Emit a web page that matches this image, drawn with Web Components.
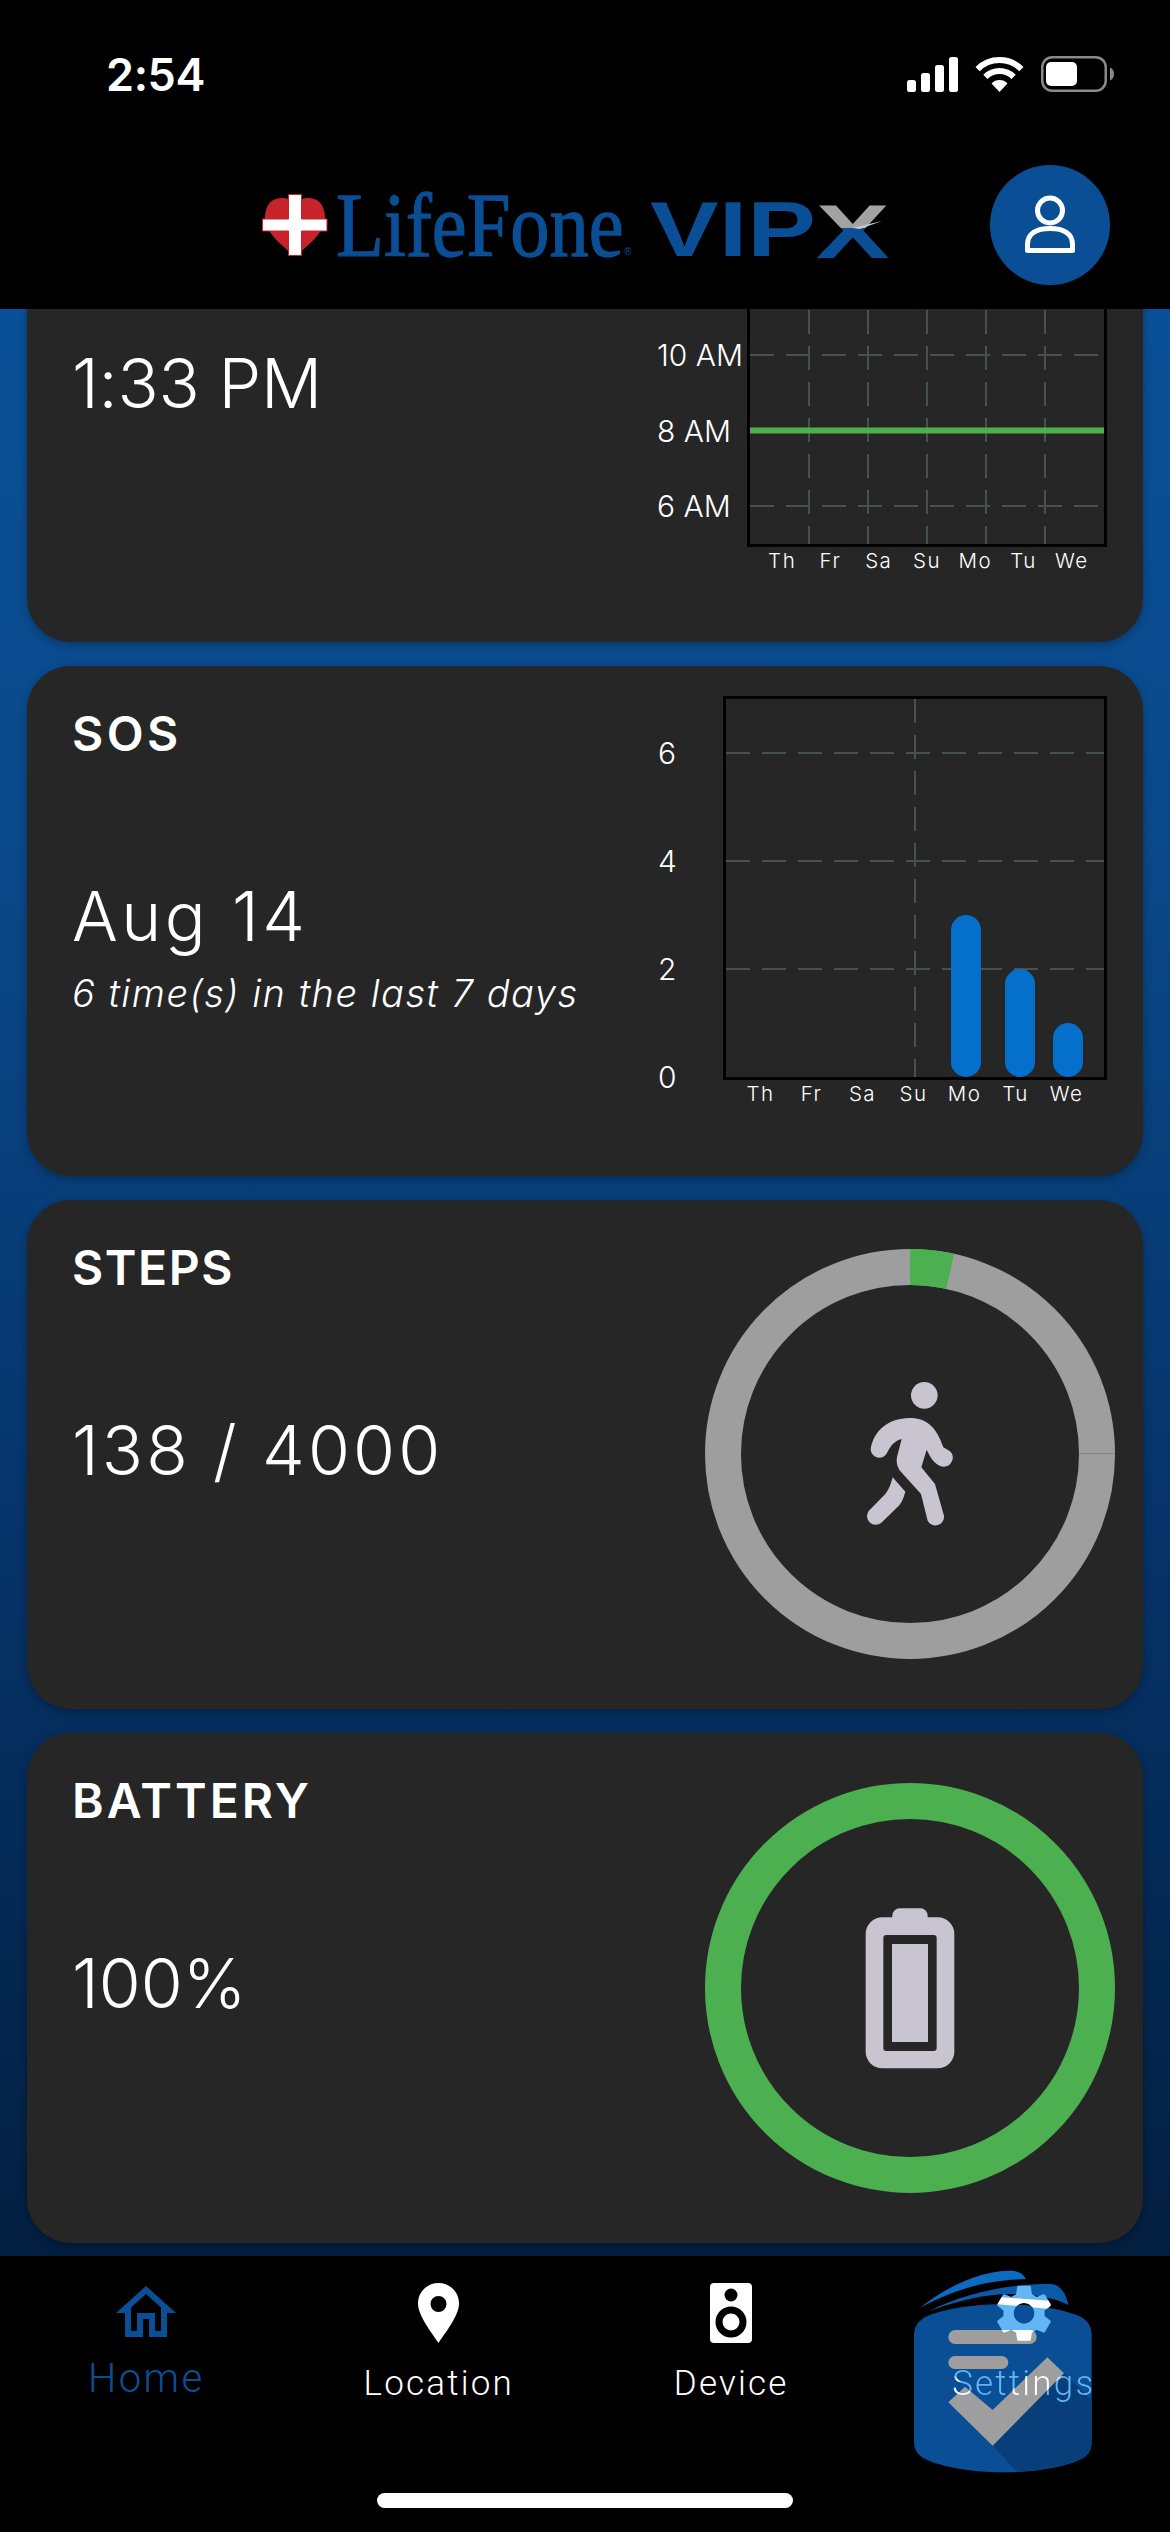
<!DOCTYPE html>
<html lang="en">
<head>
<meta charset="utf-8">
<title>LifeFone VIPx</title>
<style>
html,body{margin:0;padding:0;background:#000;width:1170px;height:2532px;overflow:hidden}
body{font-family:"Inter","Liberation Sans",sans-serif;color:#fff}
</style>
</head>
<body>
<app-shell>
  <status-bar slot="status"></status-bar>
  <app-header slot="header"></app-header>

  <metric-card title-text="" style="--vls:-.2px">
    <span slot="value">1:33 PM</span>
    <week-chart slot="aside" axis-width="90" axis-top="4.5" plot-width="354" rows=",,10 AM,8 AM,6 AM" row-height="75.6"
      vlines="59,118,177,236,295" hlines="38,113,189,265,340" line="264.5" label-pad="11,11" label-width="48.3"></week-chart>
  </metric-card>

  <metric-card title-text="SOS" style="--tls:3.5px;--vls:3.5px">
    <span slot="value">Aug 14</span>
    <span slot="note">6 time(s) in the last 7 days</span>
    <week-chart slot="aside" axis-width="65" axis-top="3" plot-width="378" rows="6,4,2,0" row-height="108"
      vlines="189" hlines="54,162,270" bars="225,279,327" bar-heights="162,108,54" label-pad="12,15" label-width="51"></week-chart>
  </metric-card>

  <metric-card title-text="STEPS" style="--tls:1.6px;--vls:3.1px">
    <span slot="value">138 / 4000</span>
    <ring-gauge slot="aside" kind="steps"></ring-gauge>
  </metric-card>

  <metric-card title-text="BATTERY" style="--tls:3px;--vls:0">
    <span slot="value">100%</span>
    <ring-gauge slot="aside" kind="battery"></ring-gauge>
  </metric-card>

  <tab-bar slot="tabs"></tab-bar>
</app-shell>

<script>
const BLUE = '#0a4f95';

class AppShell extends HTMLElement {
  constructor(){
    super();
    this.attachShadow({mode:'open'}).innerHTML = `
    <style>
      :host{display:flex;flex-direction:column;width:1170px;height:2532px;background:#000}
      .top{flex:none;background:#000;position:relative;z-index:2}
      .scroll{flex:1;min-height:0;overflow:hidden;background:linear-gradient(180deg,#0a5096 0%,#0a4a8c 25%,#06356c 60%,#031f40 100%)}
      .inner{display:flex;flex-direction:column;gap:24px;padding:0 27px;margin-top:-176.5px}
      .bottom{flex:none;position:relative;z-index:2}
    </style>
    <div class="top"><slot name="status"></slot><slot name="header"></slot></div>
    <div class="scroll"><div class="inner"><slot></slot></div></div>
    <div class="bottom"><slot name="tabs"></slot></div>`;
  }
}

class StatusBar extends HTMLElement {
  constructor(){
    super();
    this.attachShadow({mode:'open'}).innerHTML = `
    <style>
      :host{display:flex;align-items:center;justify-content:space-between;height:148px;padding:0 56px 0 106px;box-sizing:border-box;background:#000}
      .time{font:600 45px/1 "Inter","Liberation Sans",sans-serif;color:#fff;letter-spacing:-.4px}
      .icons{display:flex;align-items:center;gap:17px}
      svg{display:block}
    </style>
    <span class="time">2:54</span>
    <div class="icons">
      <svg width="51" height="36" viewBox="0 0 51 36"><g fill="#fff">
        <rect x="0" y="24" width="9" height="12" rx="2.5"/><rect x="14" y="17" width="9" height="19" rx="2.5"/>
        <rect x="28" y="9" width="9" height="27" rx="2.5"/><rect x="42" y="1" width="9" height="35" rx="2.5"/></g></svg>
      <svg width="49" height="36" viewBox="0 0 49 36"><g fill="none" stroke="#fff" stroke-width="6">
        <path d="M2.6 13.1A31 31 0 0 1 46.4 13.1"/><path d="M10.4 20.9A20 20 0 0 1 38.6 20.9"/></g>
        <path d="M24.5 36L16.5 27.5A11 11 0 0 1 32.5 27.5Z" fill="#fff"/></svg>
      <svg width="73" height="36" viewBox="0 0 73 36">
        <rect x="1.25" y="1.25" width="63.5" height="33.5" rx="10" fill="none" stroke="#8a8a8a" stroke-width="2.5"/>
        <rect x="5" y="6" width="31" height="24" rx="5" fill="#fff"/>
        <path d="M69 11.5c2.5.8 4 3.4 4 6.5s-1.500 5.700-4 6.500z" fill="#8a8a8a"/></svg>
    </div>`;
  }
}

class LifeLogo extends HTMLElement {
  constructor(){
    super();
    this.attachShadow({mode:'open'}).innerHTML = `
    <style>:host{display:block;width:626px;height:80px}svg{display:block;overflow:visible}</style>
    <svg width="626" height="80" viewBox="0 0 626 80" role="img" aria-label="LifeFone VIPx">
      <defs><linearGradient id="xg" x1="0" y1="0" x2="0" y2="1">
        <stop offset=".46" stop-color="#a2a2a2"/><stop offset=".46" stop-color="${BLUE}"/></linearGradient></defs>
      <path d="M33 14C28 8 20 7 14 9 6 11 3 20 3 28 3 42 20 56 33 66 46 56 63 42 63 28 63 20 60 11 52 9 46 7 38 8 33 14Z" fill="#c8232c"/>
      <path d="M26.500 4.500h13v24.500h25.500v12h-25.500v24.500h-13v-24.500h-26v-12h26z" fill="#fff" stroke="#c8232c" stroke-width="1"/>
      <g fill="${BLUE}">
        <text transform="translate(74 66) scale(.872 1)" font-family="Liberation Serif" font-size="90" stroke="${BLUE}" stroke-width="1.300">LifeFone</text>
        <text x="362" y="65" font-family="Liberation Sans" font-size="10">®</text>
        <text transform="translate(388 66) scale(1.32 1)" font-family="Liberation Sans" font-weight="700" font-size="78">VIP</text>
      </g>
      <text transform="translate(554 68) scale(1.45 1)" font-family="Liberation Sans" font-weight="700" font-size="76" fill="url(#xg)">X</text>
      <path d="M552 76l10-16 8-2-14 12z" fill="${BLUE}"/>
      <path d="M590 38l30-7-22 8z" fill="#c9c9c9"/>
    </svg>`;
  }
}

class AppHeader extends HTMLElement {
  constructor(){
    super();
    this.attachShadow({mode:'open'}).innerHTML = `
    <style>
      :host{display:flex;align-items:flex-start;justify-content:space-between;height:161px;box-sizing:border-box;padding:17px 60px 0 262px;background:#000}
      .logo{margin-top:25px}
      .btn{width:120px;height:120px;border-radius:50%;background:${BLUE};display:flex;align-items:center;justify-content:center}
      svg{display:block}
    </style>
    <life-logo class="logo"></life-logo>
    <div class="btn"><svg width="52" height="60" viewBox="0 0 52 60" fill="none" stroke="#fff" stroke-width="5">
      <circle cx="26" cy="15.500" r="12.500"/>
      <path d="M3.500 55.500v-6c0-11 9-16 22.500-16s22.500 5 22.500 16v6z" stroke-linejoin="round"/></svg></div>`;
  }
}

class MetricCard extends HTMLElement {
  constructor(){
    super();
    const t = this.getAttribute('title-text') || '';
    this.attachShadow({mode:'open'}).innerHTML = `
    <style>
      :host{display:flex;justify-content:space-between;height:509.5px;box-sizing:border-box;background:#262626;border-radius:44px;box-shadow:0 3px 8px rgba(0,0,0,.28);overflow:hidden;flex:none;color:#fff}
      .left{flex:1;min-width:0;padding:30px 0 0 45px;display:flex;flex-direction:column}
      .title{height:76px;line-height:76px;font-size:48px;font-weight:600;letter-spacing:var(--tls,1.8px);font-family:"Inter","Liberation Sans",sans-serif}
      .value{margin-top:104px;height:80px;line-height:80px;font-size:68px;font-weight:300;letter-spacing:var(--vls,.5px);white-space:nowrap}
      .note{margin-top:12px;height:50px;line-height:50px;font-size:38px;font-weight:300;font-style:italic;letter-spacing:1.5px;white-space:nowrap}
      .aside{flex:none;display:flex;align-items:center}
      ::slotted(week-chart){align-self:flex-start;margin:30px 36px 0 0}
      ::slotted(ring-gauge){margin-right:28px}
    </style>
    <div class="left">
      <div class="title">${t}</div>
      <div class="value"><slot name="value"></slot></div>
      <div class="note"><slot name="note"></slot></div>
    </div>
    <div class="aside"><slot name="aside"></slot></div>`;
  }
}

class WeekChart extends HTMLElement {
  constructor(){
    super();
    const a = n => this.getAttribute(n) || '';
    const nums = n => a(n) ? a(n).split(',').map(Number) : [];
    const W = +a('plot-width'), H = 378;
    const rowH = +a('row-height');
    const dash = 'stroke="#46524e" stroke-width="2" stroke-dasharray="24 12"';
    const v = nums('vlines').map(x => `<line x1="${x}" x2="${x}" y1="0" y2="${H}" ${dash}/>`).join('');
    const h = nums('hlines').map(y => `<line x1="0" x2="${W}" y1="${y}" y2="${y}" ${dash}/>`).join('');
    const bh = nums('bar-heights');
    const bars = nums('bars').map((x,i) => `<rect x="${x}" y="${H-bh[i]}" width="30" height="${bh[i]}" rx="15" fill="#0570cc"/>`).join('');
    const green = a('line') ? `<rect x="0" y="${+a('line')-3}" width="${W}" height="6" fill="#4caf50"/>` : '';
    const rows = a('rows').split(',').map(t => `<div class="yl">${t}</div>`).join('');
    const [pl,pr] = nums('label-pad');
    const lw = +a('label-width');
    const days = ['Th','Fr','Sa','Su','Mo','Tu','We'].map(d => `<span style="width:${lw}px">${d}</span>`).join('');
    this.attachShadow({mode:'open'}).innerHTML = `
    <style>
      :host{display:grid;grid-template-columns:${a('axis-width')}px ${W+6}px;grid-template-rows:${H+6}px 28px;flex:none;color:#fff}
      .axis{grid-row:1/3;padding-top:${a('axis-top')}px;height:${H}px;font-size:30px;font-weight:300}
      .yl{height:${rowH}px;line-height:${rowH}px;white-space:nowrap}
      .plot{border:3px solid #000;width:${W}px;height:${H}px}
      svg{display:block}
      .days{grid-column:2;display:flex;box-sizing:border-box;padding:0 ${pr}px 0 ${pl}px;font-size:20.500px;font-weight:300;line-height:28px;letter-spacing:1.5px}
      .days span{display:block;text-align:center;flex:none}
    </style>
    <div class="axis">${rows}</div>
    <div class="plot"><svg width="${W}" height="${H}" viewBox="0 0 ${W} ${H}">${v}${h}${green}${bars}</svg></div>
    <div class="days">${days}</div>`;
  }
}

class RingGauge extends HTMLElement {
  constructor(){
    super();
    const steps = this.getAttribute('kind') === 'steps';
    const ring = steps
      ? `<circle cx="205" cy="205" r="187" fill="none" stroke="#9e9e9e" stroke-width="36"/>
         <circle cx="205" cy="205" r="187" fill="none" stroke="#4caf50" stroke-width="36" pathLength="360" stroke-dasharray="12.42 360" transform="rotate(-90 205 205)"/>
         <line x1="374" x2="410" y1="204.500" y2="204.500" stroke="#858585" stroke-width="1"/>`
      : `<circle cx="205" cy="205" r="187" fill="none" stroke="#4caf50" stroke-width="36"/>`;
    const icon = steps
      ? `<g transform="translate(-25,-30) scale(.33333)" fill="#c9c5d0">
           <circle cx="733" cy="529" r="40"/>
           <path d="M572 690C580 640 620 597 690 597 740 597 770 625 790 685L808 695A27 27 0 0 1 790 743C770 740 755 725 740 692L724 745 765 795 792 890A26 26 0 0 1 743 905L723 825 660 755C650 740 648 725 652 710L665 660C645 665 632 680 622 700A26 26 0 0 1 572 690Z"/>
           <path d="M638 775L676 818C670 840 665 850 655 862L604 911A26 26 0 0 1 566 876L616 825C628 810 632 795 638 775Z"/>
         </g>`
      : `<g transform="translate(-25,-34) scale(.33333)">
           <rect x="637" y="478" width="106" height="60" rx="22" fill="#c9c5d0"/>
           <rect x="557" y="505" width="266" height="453" rx="50" fill="#c9c5d0"/>
           <rect x="610" y="558" width="160" height="348" rx="9" fill="#262626"/>
           <rect x="636" y="585" width="108" height="294" fill="#c9c5d0"/>
         </g>`;
    this.attachShadow({mode:'open'}).innerHTML = `
    <style>:host{display:block;width:410px;height:410px;flex:none}svg{display:block}</style>
    <svg width="410" height="410" viewBox="0 0 410 410">${ring}${icon}</svg>`;
  }
}

class TabItem extends HTMLElement {
  constructor(){
    super();
    this.attachShadow({mode:'open'}).innerHTML = `
    <style>
      :host{display:flex;flex-direction:column;align-items:center;position:relative;padding-top:21px;color:#fff}
      .icon{height:72px;display:flex;align-items:center;justify-content:center;position:relative;z-index:1}
      .label{margin-top:12px;height:46px;font:300 35px/46px Roboto,"Liberation Sans",sans-serif;letter-spacing:2.2px;white-space:nowrap;position:relative;z-index:1}
      :host([active]) .label{margin-top:7px;font-size:40px;letter-spacing:2.4px;color:${BLUE}}
      :host([kind=settings]) .label{color:transparent;
        background-color:#64b5f6;
        background-image:linear-gradient(45deg,#fff 0 24px,transparent 24px),linear-gradient(135deg,transparent 63px,#fff 63px 88px,transparent 88px);
        -webkit-background-clip:text;background-clip:text}
      ::slotted(svg){display:block}
    </style>
    <div class="icon"><slot name="icon"></slot></div>
    <div class="label"><slot></slot></div>
    <slot name="overlay"></slot>`;
  }
}

class TabBar extends HTMLElement {
  constructor(){
    super();
    const gear = 'M19.14 12.94c.04-.3.06-.61.06-.94 0-.32-.02-.64-.07-.94l2.03-1.58c.18-.14.23-.41.12-.61l-1.92-3.32c-.12-.22-.37-.29-.59-.22l-2.39.96c-.5-.38-1.03-.7-1.62-.94l-.36-2.54c-.04-.24-.24-.41-.48-.41h-3.84c-.24 0-.43.17-.47.41l-.36 2.54c-.59.24-1.13.57-1.62.94l-2.39-.96c-.22-.08-.47 0-.59.22L2.74 8.87c-.12.21-.08.47.12.61l2.03 1.58c-.05.3-.09.63-.09.94s.02.64.07.94l-2.03 1.58c-.18.14-.23.41-.12.61l1.92 3.32c.12.22.37.29.59.22l2.39-.96c.5.38 1.03.7 1.62.94l.36 2.54c.05.24.24.41.48.41h3.84c.24 0 .44-.17.47-.41l.36-2.54c.59-.24 1.13-.56 1.62-.94l2.39.96c.22.08.47 0 .59-.22l1.92-3.32c.12-.22.07-.47-.12-.61l-2.01-1.58zM12 15.6c-1.98 0-3.6-1.62-3.6-3.6s1.62-3.6 3.6-3.6 3.6 1.62 3.6 3.6-1.62 3.6-3.6 3.6z';
    this.attachShadow({mode:'open'}).innerHTML = `
    <style>
      :host{display:block;height:276px;background:#000;position:relative}
      .tabs{display:grid;grid-template-columns:repeat(4,1fr)}
      .home-ind{position:absolute;left:377px;top:237px;width:416px;height:15px;border-radius:8px;background:#fff}
    </style>
    <div class="tabs">
      <tab-item active>
        <svg slot="icon" width="72" height="72" viewBox="0 0 24 24"><path fill="${BLUE}" d="M12 5.690l5 4.500V18h-2v-6H9v6H7v-7.810l5-4.500M12 3L2 12h3v8h6v-6h2v6h6v-8h3L12 3z"/></svg>
        Home
      </tab-item>
      <tab-item>
        <svg slot="icon" width="41" height="60" viewBox="0 0 41 60"><path fill="#fff" fill-rule="evenodd" d="M20.500 0C9 0 0 9 0 20.500 0 33 14 50 20.500 60 27 50 41 33 41 20.500 41 9 32 0 20.500 0ZM20.500 13a8 8 0 1 1 0 16 8 8 0 0 1 0-16Z"/></svg>
        Location
      </tab-item>
      <tab-item>
        <svg slot="icon" width="42" height="60" viewBox="0 0 42 60"><rect width="42" height="60" rx="4" fill="#fff"/><circle cx="21" cy="12" r="6.500" fill="#000"/><circle cx="21" cy="39" r="15.500" fill="#000"/><circle cx="21" cy="39" r="8.500" fill="#fff"/></svg>
        Device
      </tab-item>
      <tab-item kind="settings">
        <svg slot="overlay" style="position:absolute;left:-37.500px;top:-16px" width="330" height="260" viewBox="0 0 990 780">
          <defs>
            <clipPath id="wh"><path d="M465 170L640 183 640 208 465 192Z"/><rect x="325" y="270" width="265" height="42" rx="21"/></clipPath>
          </defs>
          <path d="M240 203C320 140 420 92 510 92 535 92 550 102 558 118 440 118 340 150 240 203Z" fill="#0b6bc0"/>
          <path d="M265 215C370 160 500 132 630 132 660 132 678 160 685 195 640 170 560 158 480 163 410 168 330 190 265 215Z" fill="#0a5aa8"/>
          <path d="M490 193C600 193 680 212 722 230 744 242 755 260 755 285V606C755 630 744 648 722 658 680 680 590 697 490 697 390 697 300 680 258 658 235 648 222 630 222 606V285C222 260 235 242 258 230 300 212 380 193 490 193Z" fill="${BLUE}"/>
          <path d="M458 617L672 400 755 480V606C755 630 744 648 722 658 680 678 610 692 532 696Z" fill="#083f7a"/>
          <rect x="325" y="270" width="265" height="42" rx="21" fill="#9e9e9e"/>
          <rect x="325" y="348" width="180" height="39" rx="19.500" fill="#9e9e9e"/>
          <path d="M325 487L375 440 458 510 622 352 672 400 458 617Z" fill="#9e9e9e"/>
          <g transform="translate(448.800,116.800) scale(8.600)">
            <path d="${gear}" fill="#64b5f6" fill-rule="evenodd"/>
          </g>
          <g clip-path="url(#wh)"><g transform="translate(448.800,116.800) scale(8.600)">
            <path d="${gear}" fill="#fff" fill-rule="evenodd"/>
          </g></g>
        </svg>
        Settings
      </tab-item>
    </div>
    <div class="home-ind"></div>`;
  }
}

customElements.define('app-shell', AppShell);
customElements.define('status-bar', StatusBar);
customElements.define('life-logo', LifeLogo);
customElements.define('app-header', AppHeader);
customElements.define('metric-card', MetricCard);
customElements.define('week-chart', WeekChart);
customElements.define('ring-gauge', RingGauge);
customElements.define('tab-item', TabItem);
customElements.define('tab-bar', TabBar);
</script>
</body>
</html>
